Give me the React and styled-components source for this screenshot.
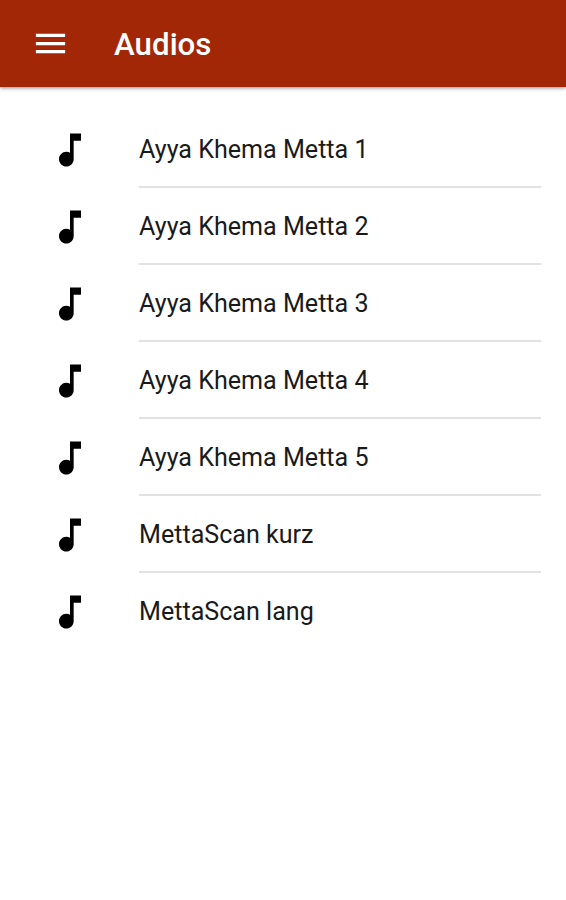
import React from "react";
import styled, { createGlobalStyle } from "styled-components";
import { MdMenu, MdMusicNote } from "react-icons/md";

const GlobalStyles = createGlobalStyle`
  body {
    margin: 0;
    background: #fff;
    font-family: Roboto, "Liberation Sans", sans-serif;
  }
`;

const Screen = styled.div`
  min-height: 900px;
`;

const Toolbar = styled.header`
  display: flex;
  align-items: center;
  height: 87px;
  box-sizing: border-box;
  padding-left: 31px;
  background: #a12706;
  color: #fff;
  box-shadow: 0 1px 4px rgba(0, 0, 0, 0.45);
`;

const MenuButton = styled.button`
  display: flex;
  margin: 0;
  padding: 0;
  border: none;
  background: transparent;
  color: inherit;
  font-size: 39px;
`;

const Title = styled.h1`
  margin: 2px 0 0 44px;
  font-size: 31.3px;
  font-weight: 500;
`;

const List = styled.ul`
  margin: 0;
  padding: 24px 25px 0 47.5px;
  list-style: none;
`;

const Item = styled.li`
  display: flex;
  align-items: center;
  height: 77px;
`;

const NoteIcon = styled(MdMusicNote)`
  flex: none;
  width: 44px;
  height: 44px;
  color: #000;
`;

const Label = styled.span`
  flex: 1;
  display: flex;
  align-items: center;
  box-sizing: border-box;
  height: 100%;
  margin-left: 47.5px;
  padding-top: 2px;
  border-bottom: 2px solid ${props => (props.$last ? "transparent" : "#e2e2e2")};
  color: #1a1a1a;
  font-size: 25.1px;
`;

const audios = [
  "Ayya Khema Metta 1",
  "Ayya Khema Metta 2",
  "Ayya Khema Metta 3",
  "Ayya Khema Metta 4",
  "Ayya Khema Metta 5",
  "MettaScan kurz",
  "MettaScan lang"
];

export default function App() {
  return (
    <Screen>
      <GlobalStyles />
      <Toolbar>
        <MenuButton aria-label="Menu">
          <MdMenu />
        </MenuButton>
        <Title>Audios</Title>
      </Toolbar>
      <List>
        {audios.map((name, i) => (
          <Item key={name}>
            <NoteIcon />
            <Label $last={i === audios.length - 1}>{name}</Label>
          </Item>
        ))}
      </List>
    </Screen>
  );
}
